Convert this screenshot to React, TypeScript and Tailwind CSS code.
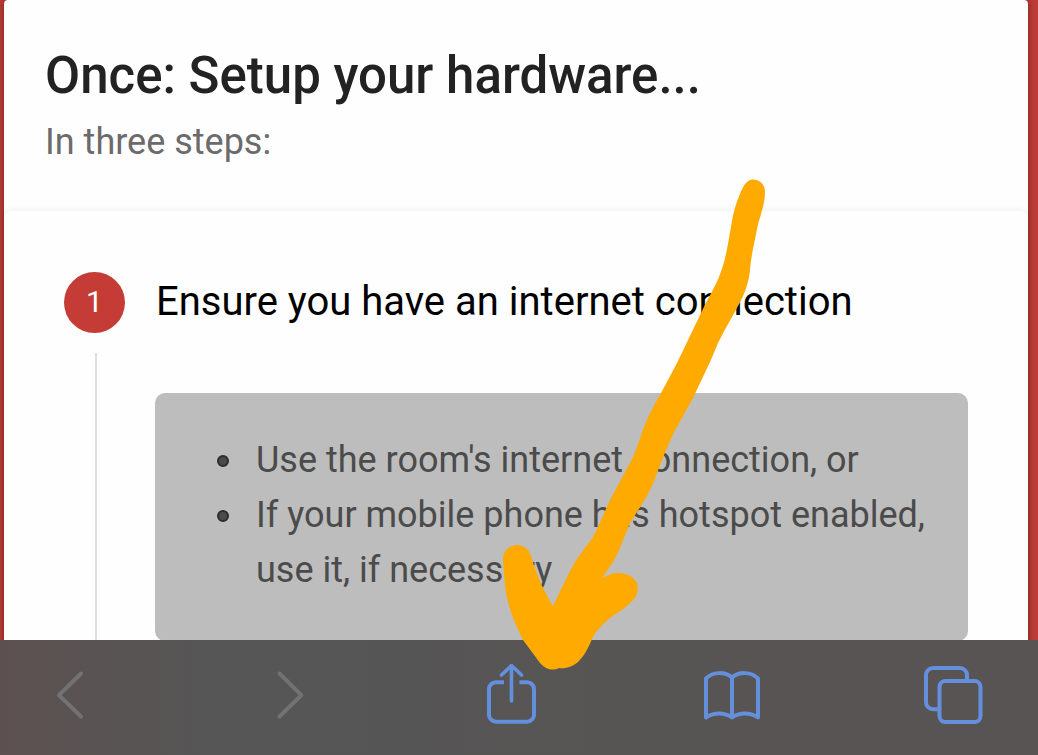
import type { ReactNode } from "react";

type ToolButtonProps = {
  label: string;
  disabled?: boolean;
  children: ReactNode;
};

function ToolButton({ label, disabled = false, children }: ToolButtonProps) {
  return (
    <button
      type="button"
      aria-label={label}
      disabled={disabled}
      className="size-16 text-[#648fdc] disabled:text-[#727272]"
    >
      <svg
        viewBox="0 0 64 64"
        className="size-16"
        fill="none"
        stroke="currentColor"
        strokeWidth="4"
        strokeLinecap="round"
        strokeLinejoin="round"
        aria-hidden="true"
      >
        {children}
      </svg>
    </button>
  );
}

function Toolbar() {
  return (
    <nav
      aria-label="Browser"
      className="flex h-[115px] shrink-0 items-start justify-between bg-linear-to-r from-[#5c5150] from-0% via-[#565656] via-20% to-[#585453] pt-6 pr-[53px] pl-[38px]"
    >
      <ToolButton label="Back" disabled>
        <path d="M43 9.500 21 31.200 43 52.500" />
      </ToolButton>
      <ToolButton label="Forward" disabled>
        <path d="M20.500 9.500 42.300 31.200 20.500 52.500" />
      </ToolButton>
      <ToolButton label="Share">
        <path
          strokeLinecap="butt"
          d="M24 18.200H16A7 7 0 0 0 9 25.200V50.700A7 7 0 0 0 16 57.700H47A7 7 0 0 0 54 50.700V25.200A7 7 0 0 0 47 18.200H39.500"
        />
        <path strokeWidth="3.600" d="M31.500 37V2M21.500 11 31.500 1.500 41.500 11" />
      </ToolButton>
      <ToolButton label="Bookmarks">
        <path d="M32 53.500C25 48 13 48 6 53.500V14.500C13 7.500 25 7.500 32 13.500C39 7.500 51 7.500 58 14.500V53.500C51 48 39 48 32 53.500ZM32 13.500V53.500" />
      </ToolButton>
      <ToolButton label="Tabs">
        <path d="M17.500 45.200H12A7 7 0 0 1 5 38.200V11A7 7 0 0 1 12 4H39A7 7 0 0 1 46 11V17" />
        <rect x="18.500" y="17" width="41" height="41" rx="6" />
      </ToolButton>
    </nav>
  );
}

function HandDrawnArrow() {
  return (
    <svg
      viewBox="0 0 140 500"
      className="pointer-events-none absolute top-[175px] left-[500px] h-[500px] w-[140px] overflow-visible"
      fill="#ffaa00"
      aria-hidden="true"
    >
      <path d="M253 4.500C247 4.500 243.500 10 240 19C236 28 233 38 231 52C228 68 226 85 219 102C215 112 208 123 202 136L177 188L160 220C152 233 147 244 143 255C138 269 135 279 130 288L110 325C103 340 99 351 93 362C85 373 76 384 70 396L53 431C46 420 37 402 32 384C30 375 24 370 17 370C8 370 2 378 3 387L5 410C7 430 14 447 23 465L40 488C46 495 53 496 59 493C65 494 73 492 79 486C85 480 89 471 93 462C96 456 103 449 110 443C118 437 126 433 131 427C137 423 139 414 137 408C134 402 127 398 118 398C112 398 108 400 102 403C108 394 115 386 119 375L130 348C140 332 151 317 157 298C164 280 171 262 178 250L193 223L210 187L218 168C225 154 232 142 238 131C245 119 249 106 250 95C251 80 255 66 257 54C259 43 265 31 265 17C265 10 260 4.500 253 4.500Z" />
    </svg>
  );
}

const options = [
  "Use the room's internet connection, or",
  "If your mobile phone has hotspot enabled, use it, if necessary",
];

export default function App() {
  return (
    <div className="relative flex h-screen flex-col overflow-hidden bg-[#bd3c35] font-['Roboto',sans-serif]">
      <main className="min-h-0 flex-1 overflow-hidden pr-[10px] pl-1">
        <article className="rounded-t-sm bg-[#fefefe] shadow-[0_0_6px_rgba(0,0,0,0.4)]">
          <header className="h-[211px] px-[41px] pt-11">
            <h1 className="text-[51px] leading-[64px] font-medium text-[#222222]">
              Once: Setup your hardware...
            </h1>
            <p className="mt-2 text-[36px] leading-[52px] text-[#6b6b6b]">
              In three steps:
            </p>
          </header>
          <section className="rounded-t-lg bg-[#fefefe] px-[60px] pt-[61px] shadow-[0_-2px_5px_rgba(0,0,0,0.05)]">
            <div className="flex items-center gap-[31px]">
              <span className="flex size-[61px] shrink-0 items-center justify-center rounded-full bg-[#c43c35] pb-0.5 text-[30px] leading-none text-white">
                1
              </span>
              <h2 className="pb-0.5 text-[40px] leading-[48px] text-black">
                Ensure you have an internet connection
              </h2>
            </div>
            <div className="mt-5 ml-[31px] border-l-2 border-[#dedede] pt-10 pb-10 pl-[58px]">
              <div className="rounded-[10px] bg-[#bdbdbd] px-10 pt-10 pb-[43px]">
                <ul className="pl-[22px] text-[36px] leading-[55px] text-[#4b4b4b]">
                  {options.map((option) => (
                    <li key={option} className="flex items-start gap-[27px]">
                      <span className="mt-[22px] size-3 shrink-0 rounded-full border-2 border-[#2c2c2c] bg-[#4b4b4b]" />
                      <span>{option}</span>
                    </li>
                  ))}
                </ul>
              </div>
            </div>
          </section>
        </article>
      </main>
      <Toolbar />
      <HandDrawnArrow />
    </div>
  );
}
